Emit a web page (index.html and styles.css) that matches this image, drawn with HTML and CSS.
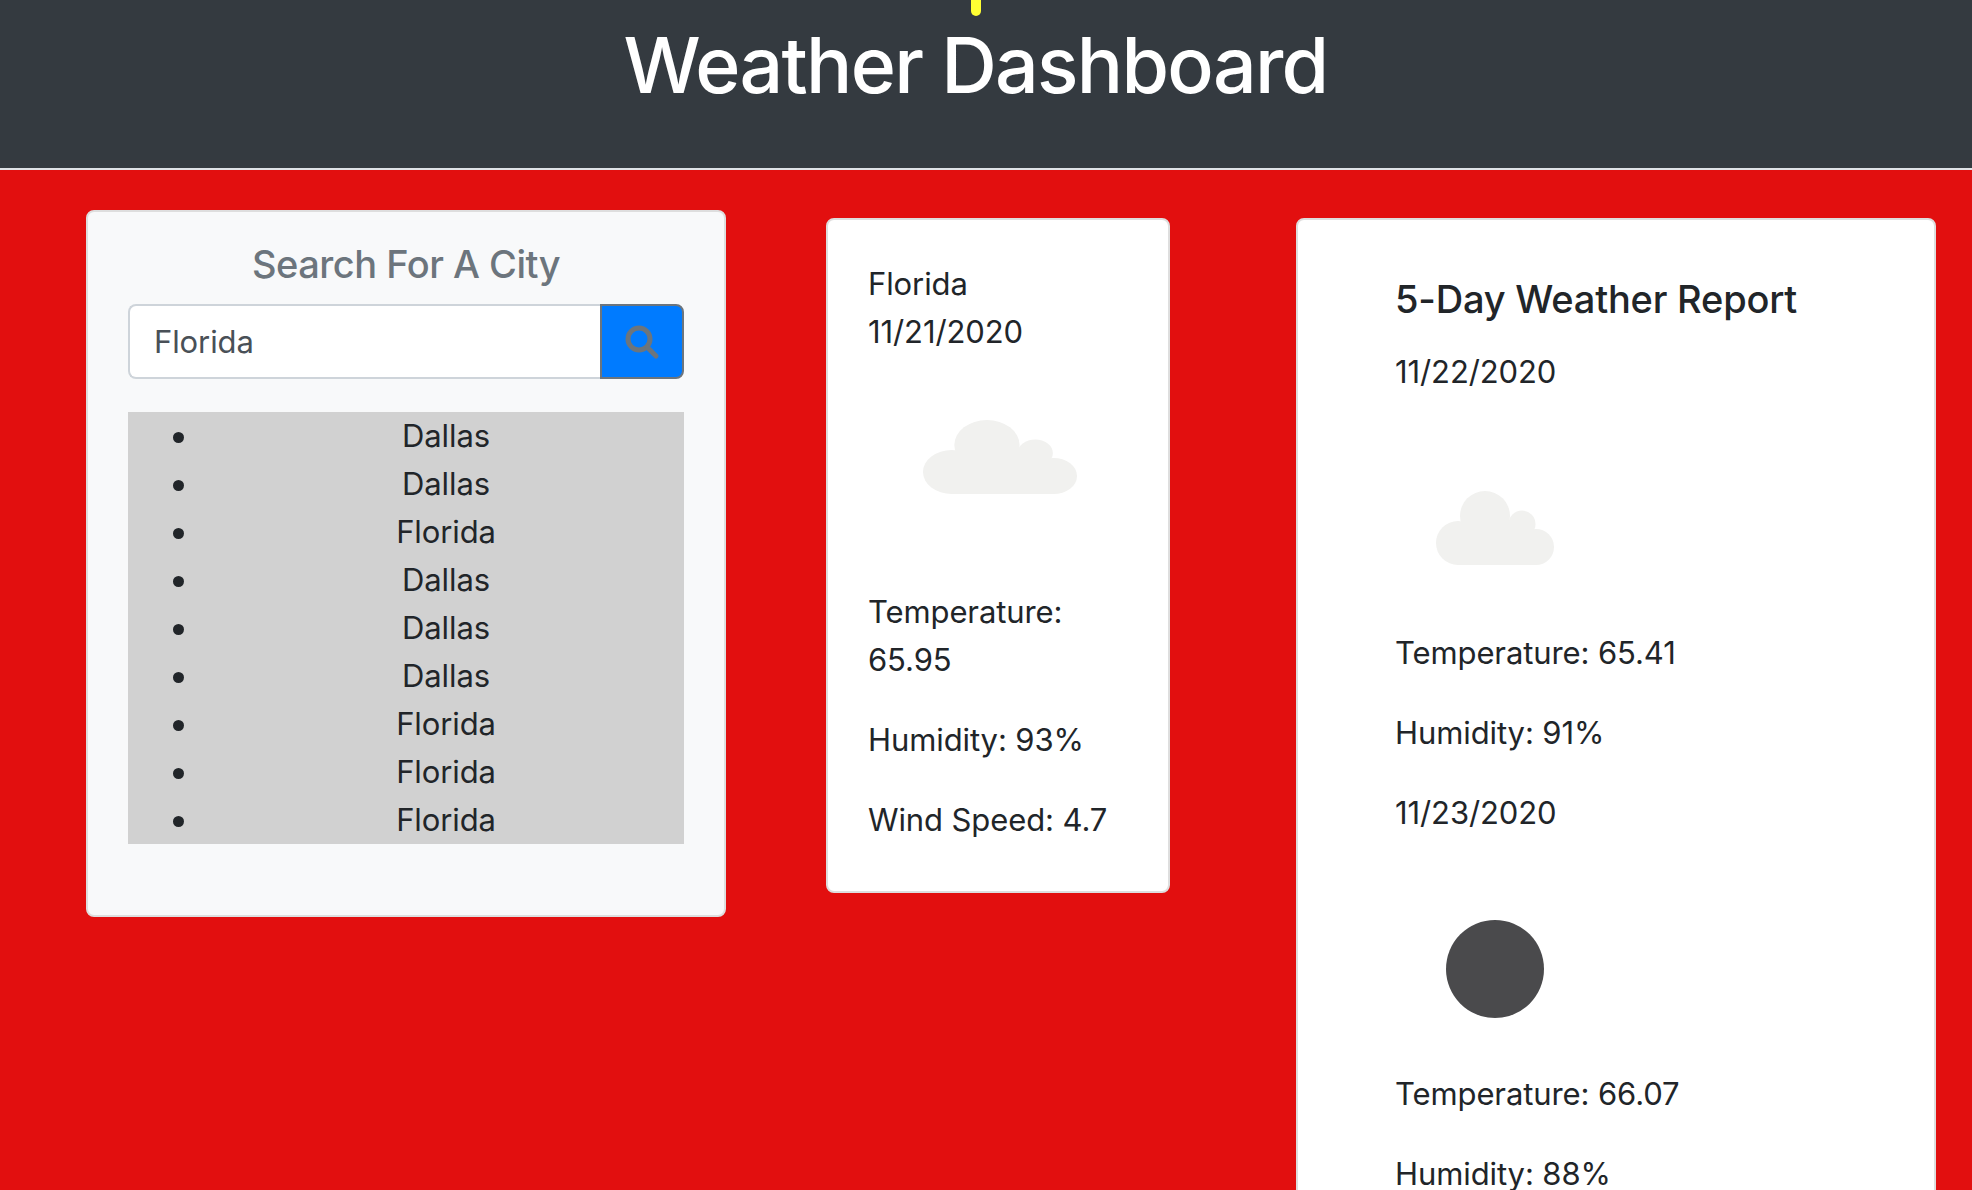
FILE: index.html
```html
<!DOCTYPE html>
<html lang="en">
<head>
    <meta charset="UTF-8">
    <title>Weather Dashboard</title>
    <link rel="stylesheet" href="styles.css">
</head>
<body>
    <svg width="0" height="0" class="defs">
        <symbol id="cloud" viewBox="0 0 118 74" preserveAspectRatio="none">
            <circle cx="49" cy="25" r="25"/>
            <circle cx="86" cy="33" r="13.5"/>
            <circle cx="22" cy="52" r="22"/>
            <circle cx="100" cy="56" r="18"/>
            <rect x="22" y="40" width="78" height="34"/>
            <rect x="30" y="30" width="60" height="12"/>
        </symbol>
    </svg>
    <span class="tick"></span>
    <!-- header -->
    <header class="top">
        <h1>Weather Dashboard</h1>
    </header>
    <div class="main">
        <!-- search -->
        <section class="card search">
            <h5>Search For A City</h5>
            <div class="group">
                <input type="text" value="Florida">
                <button type="button">
                    <svg width="40" height="40" viewBox="0 0 40 40" fill="none" stroke="#6c757d" stroke-width="5" stroke-linecap="round">
                        <circle cx="17" cy="17" r="11"/>
                        <path d="M25.5 25.5L34 34"/>
                    </svg>
                </button>
            </div>
            <ul class="history">
                <li>Dallas</li>
                <li>Dallas</li>
                <li>Florida</li>
                <li>Dallas</li>
                <li>Dallas</li>
                <li>Dallas</li>
                <li>Florida</li>
                <li>Florida</li>
                <li>Florida</li>
            </ul>
        </section>
        <!-- today -->
        <section class="card today">
            <div>Florida</div>
            <div>11/21/2020</div>
            <div class="today-icon"><svg class="cloud-wide"><use href="#cloud"/></svg></div>
            <p>Temperature: 65.95</p>
            <p>Humidity: 93%</p>
            <p>Wind Speed: 4.7</p>
        </section>
        <!-- 5 day -->
        <section class="card report">
            <h5>5-Day Weather Report</h5>
            <p>11/22/2020</p>
            <div class="icon"><svg class="cloud"><use href="#cloud"/></svg></div>
            <p>Temperature: 65.41</p>
            <p>Humidity: 91%</p>
            <p>11/23/2020</p>
            <div class="icon"><span class="moon"></span></div>
            <p>Temperature: 66.07</p>
            <p>Humidity: 88%</p>
        </section>
    </div>
</body>
</html>
```

FILE: styles.css
```css
html, body {
    height: 1190px;
    overflow: hidden;
}
body {
    margin: 0;
    background: #e20f0f;
    color: #212529;
    font-family: "Inter", "Liberation Sans", sans-serif;
    font-size: 31px;
    line-height: 48px;
    letter-spacing: -.1px;
}
.defs {
    position: absolute;
}
.tick {
    position: absolute;
    top: 0;
    left: 971px;
    width: 10px;
    height: 16px;
    background: #ffff33;
    border-radius: 0 0 5px 5px;
}
.top {
    height: 168px;
    background: #343a40;
    border-bottom: 2px solid #dee2e6;
    text-align: center;
}
.top h1 {
    margin: 0;
    padding: 17px 21px 0 0;
    color: #fff;
    font-size: 77px;
    font-weight: 500;
    line-height: 96px;
    letter-spacing: -1.7px;
}
.main {
    display: flex;
    align-items: flex-start;
    padding-left: 86px;
}
.card {
    box-sizing: border-box;
    background: #fff;
    border: 2px solid #dedede;
    border-radius: 8px;
}
h5 {
    margin: 0;
    font-size: 38px;
    font-weight: 500;
    line-height: 48px;
    letter-spacing: -.2px;
}
p {
    margin: 0 0 32px;
}
.search {
    width: 640px;
    height: 707px;
    margin-top: 40px;
    padding: 28px 40px;
    background-color: #f8f9fa;
}
.search h5 {
    color: #6c757d;
    text-align: center;
    letter-spacing: -.5px;
}
.group {
    display: flex;
    height: 75px;
    margin-top: 16px;
}
.group input {
    flex: 1;
    min-width: 0;
    box-sizing: border-box;
    padding: 0 24px;
    border: 2px solid #ced4da;
    border-right: 0;
    border-radius: 8px 0 0 8px;
    outline: 0;
    color: #495057;
    font: inherit;
    letter-spacing: -.1px;
}
.group button {
    display: flex;
    align-items: center;
    justify-content: center;
    box-sizing: border-box;
    width: 84px;
    padding: 0;
    background: #007bff;
    border: 2px solid #6c757d;
    border-radius: 0 8px 8px 0;
}
.history {
    margin: 33px 0 0;
    padding: 0 0 0 80px;
    background: #d1d1d1;
    list-style: none;
    text-align: center;
}
.history li {
    position: relative;
}
/* bullet sits further left than the default marker */
.history li::before {
    content: "";
    position: absolute;
    top: 20px;
    left: -35px;
    width: 11px;
    height: 11px;
    background: #212529;
    border-radius: 50%;
}
.today {
    width: 344px;
    height: 675px;
    margin: 48px 0 0 100px;
    padding: 40px;
}
.today-icon {
    box-sizing: border-box;
    height: 200px;
    margin-top: 32px;
    padding: 32px 0 0 3px;
}
.cloud-wide {
    display: block;
    width: 154px;
    height: 74px;
    margin: 0 auto;
    fill: #f1f1ef;
}
.report {
    width: 640px;
    height: 1200px;
    margin: 48px 0 0 126px;
    padding: 55px 40px 0 97px;
}
.report h5 {
    margin-bottom: 25px;
}
.icon {
    display: flex;
    align-items: center;
    justify-content: center;
    width: 200px;
    height: 200px;
    margin-bottom: 1px;
}
.cloud {
    width: 118px;
    height: 74px;
    fill: #f1f1ef;
}
.moon {
    width: 98px;
    height: 98px;
    background: #4a4a4c;
    border-radius: 50%;
}
```
